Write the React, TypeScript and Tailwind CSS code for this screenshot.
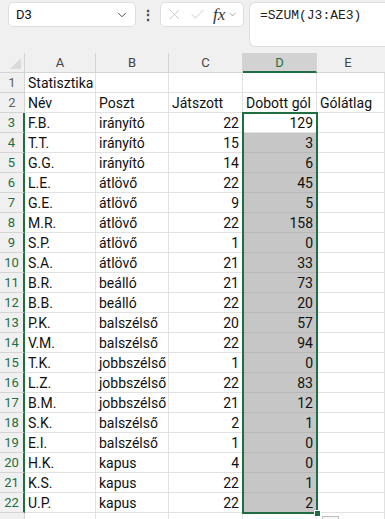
import { ChevronDown, X, Check } from 'lucide-react'

const rows: [string, string, number, number][] = [
  ['F.B.', 'irányító', 22, 129],
  ['T.T.', 'irányító', 15, 3],
  ['G.G.', 'irányító', 14, 6],
  ['L.E.', 'átlövő', 22, 45],
  ['G.E.', 'átlövő', 9, 5],
  ['M.R.', 'átlövő', 22, 158],
  ['S.P.', 'átlövő', 1, 0],
  ['S.A.', 'átlövő', 21, 33],
  ['B.R.', 'beálló', 21, 73],
  ['B.B.', 'beálló', 22, 20],
  ['P.K.', 'balszélső', 20, 57],
  ['V.M.', 'balszélső', 22, 94],
  ['T.K.', 'jobbszélső', 1, 0],
  ['L.Z.', 'jobbszélső', 22, 83],
  ['B.M.', 'jobbszélső', 21, 12],
  ['S.K.', 'balszélső', 2, 1],
  ['E.I.', 'balszélső', 1, 0],
  ['H.K.', 'kapus', 4, 0],
  ['K.S.', 'kapus', 22, 1],
  ['U.P.', 'kapus', 22, 2],
]

const cell = 'h-5 border-r border-b border-[#e1e1e1] px-[3px] leading-5 whitespace-nowrap overflow-visible'

function RowHead({ n, sel }: { n: number; sel?: boolean }) {
  return (
    <div
      className={
        'h-5 bg-[#f0f0f0] border-b border-[#d4d4d4] text-center text-[13px] leading-5 ' +
        (sel ? 'text-[#1e6e42] border-r-2 border-r-[#1e6e42]' : 'text-[#5f5f5f] border-r border-r-[#d4d4d4]')
      }
    >
      {n}
    </div>
  )
}

export default function App() {
  return (
    <div className="w-[385px] h-[519px] overflow-hidden bg-white text-[#111] font-['Roboto',sans-serif] text-[14px]">
      {/* formula bar */}
      <div className="h-[53px] bg-[#f0f0f0] flex items-start gap-[5px] pt-[2px] pl-2">
        <div className="w-[128px] h-[25px] bg-white rounded-[5px] border border-[#dedede] flex items-center pl-[7px] pr-[6px] text-[13px]">
          <span className="flex-1">D3</span>
          <ChevronDown size={14} strokeWidth={1.6} className="text-[#444]" />
        </div>
        <div className="w-[14px] h-[25px] flex items-center justify-center text-[#444] text-[14px] font-bold leading-none">⋮</div>
        <div className="w-[84px] h-[25px] bg-white rounded-[5px] border border-[#dedede] flex items-center pl-[5px] gap-[6px]">
          <X size={17} strokeWidth={1} className="text-[#b5b5b5]" />
          <Check size={17} strokeWidth={1} className="text-[#b5b5b5]" />
          <span className="font-['Liberation_Serif',serif] italic text-[17px] text-[#333] leading-none ml-[1px]">fx</span>
          <ChevronDown size={11} strokeWidth={1.4} className="text-[#777] -ml-[4px]" />
        </div>
        <div className="flex-1 h-[45px] bg-white rounded-l-[6px] border border-r-0 border-[#dedede] pl-[10px] pt-[3px] font-['Liberation_Mono',monospace] text-[13px] text-[#222]">
          =SZUM(J3:AE3)
        </div>
      </div>

      {/* sheet grid */}
      <div className="relative grid grid-cols-[25px_71px_73px_74px_74px_1fr]">
        {/* column headers */}
        <div className="h-5 bg-[#f0f0f0] border-r border-b border-[#d4d4d4] relative">
          <div className="absolute right-[3px] bottom-[3px] w-0 h-0 border-l-[11px] border-l-transparent border-b-[11px] border-b-[#dadada]" />
        </div>
        {['A', 'B', 'C'].map((c) => (
          <div key={c} className="h-5 bg-[#f0f0f0] border-r border-b border-[#d4d4d4] text-center text-[13px] leading-5 text-[#444]">
            {c}
          </div>
        ))}
        <div className="h-5 bg-[#d2d2d2] border-r border-r-[#d4d4d4] border-b-2 border-b-[#1e6e42] text-center text-[13px] leading-[19px] text-[#1e6e42]">
          D
        </div>
        <div className="h-5 bg-[#f0f0f0] border-b border-[#d4d4d4] text-center text-[13px] leading-5 text-[#444] pr-[6px]">E</div>

        {/* row 1 */}
        <RowHead n={1} />
        <div className={cell}>Statisztika</div>
        <div className={cell} />
        <div className={cell} />
        <div className={cell} />
        <div className={cell} />

        {/* row 2 */}
        <RowHead n={2} />
        <div className={cell}>Név</div>
        <div className={cell}>Poszt</div>
        <div className={cell}>Játszott</div>
        <div className={cell}>Dobott gól</div>
        <div className={cell}>Gólátlag</div>

        {rows.map(([name, pos, played, goals], i) => (
          <div key={i} className="contents">
            <RowHead n={i + 3} sel />
            <div className={cell}>{name}</div>
            <div className={cell}>{pos}</div>
            <div className={cell + ' text-right'}>{played}</div>
            <div className={cell + ' text-right ' + (i === 0 ? '' : 'bg-[#c6c6c6] border-b-[#b8b8b8]')}>{goals}</div>
            <div className={cell} />
          </div>
        ))}

        {/* row 23 */}
        <div className="h-5 bg-[#f0f0f0] border-r border-[#d4d4d4]" />
        <div className={cell} />
        <div className={cell} />
        <div className={cell} />
        <div className={cell} />
        <div className={cell} />

        {/* selection outline */}
        <div className="absolute left-[242px] top-[59px] w-[76px] h-[402px] border-2 border-[#1e6e42] pointer-events-none" />
        <div className="absolute left-[314px] top-[457px] w-[7px] h-[7px] bg-[#1e6e42] border border-white" />
        <div className="absolute left-[322px] top-[463px] w-[17px] h-[12px] border border-[#bdbdbd] bg-[#f7f7f7]" />
      </div>
    </div>
  )
}
